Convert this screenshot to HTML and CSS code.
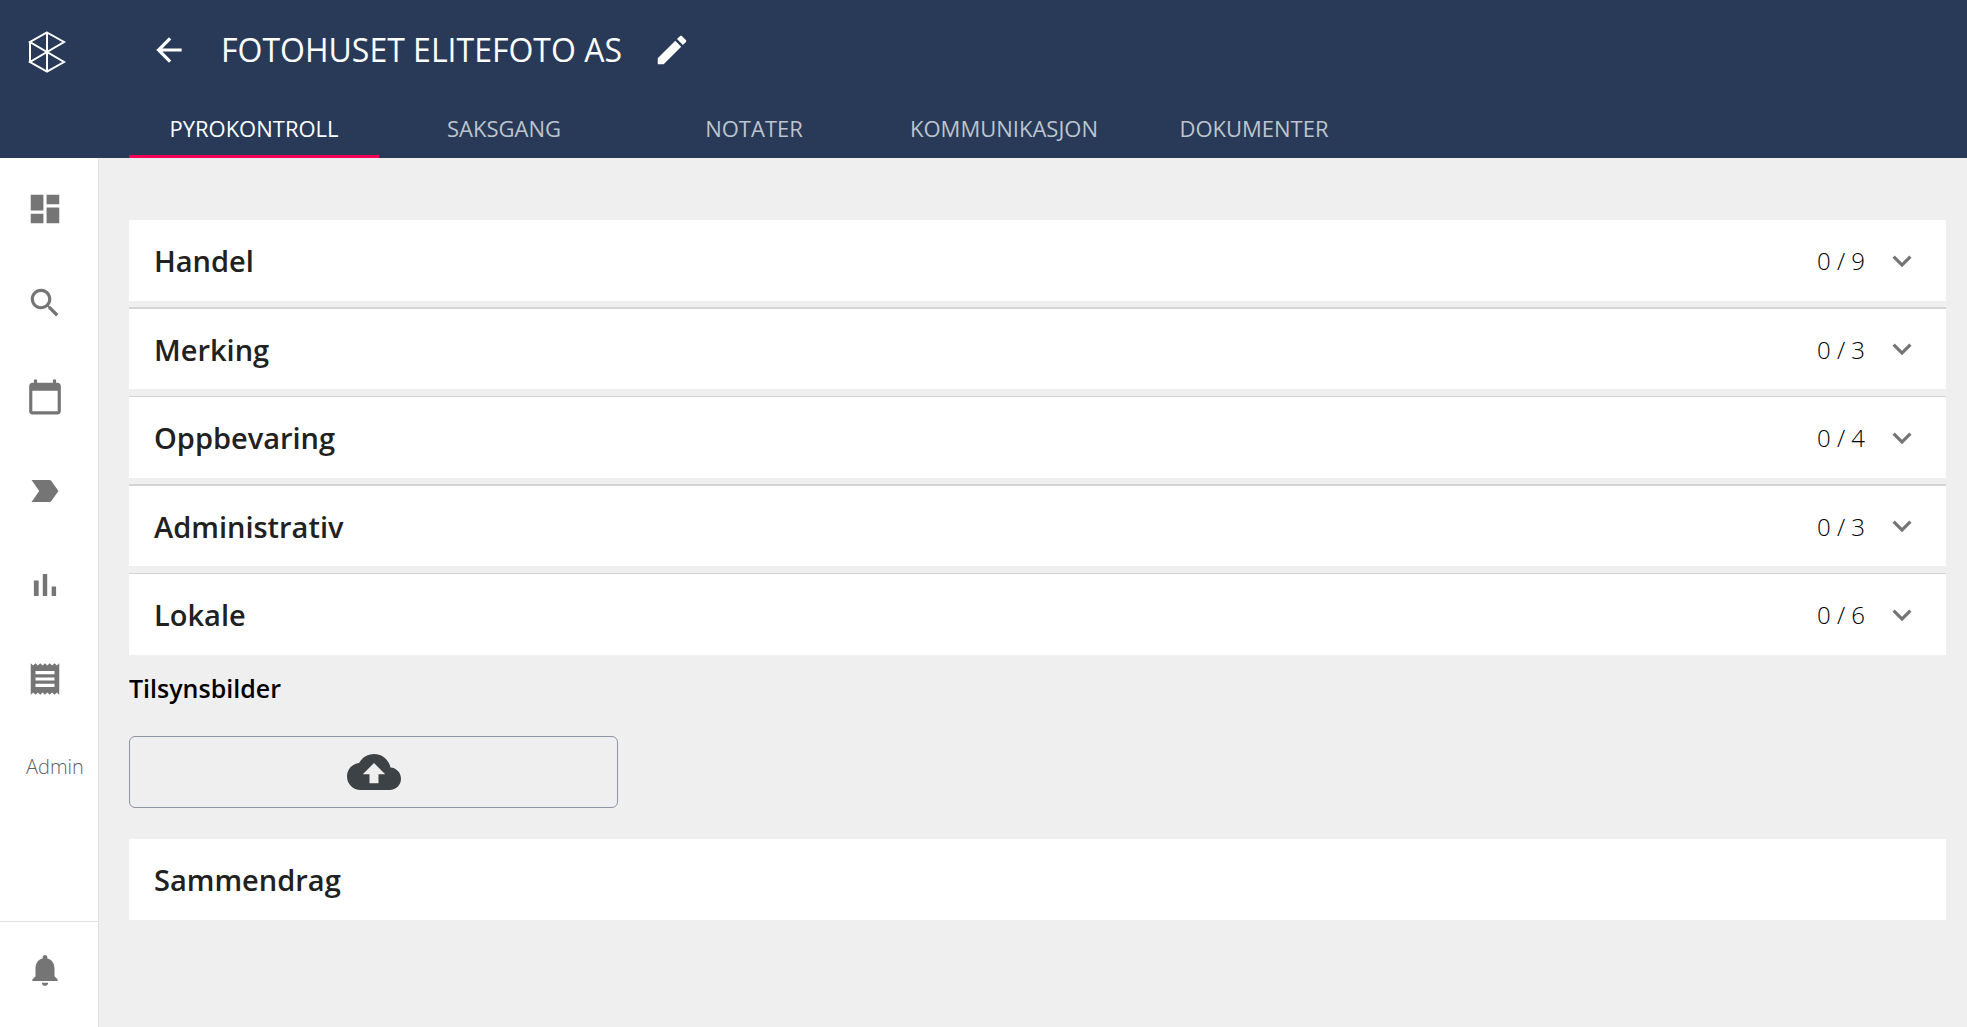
FILE: index.html
```
<!DOCTYPE html>
<html lang="no">
<head>
    <meta charset="UTF-8">
    <meta name="viewport" content="width=device-width, initial-scale=1.0">
    <title>Fotohuset Elitefoto AS</title>
    <link rel="stylesheet" href="styles.css">
</head>
<body>
    <header class="header">
        <a href="#" class="logo" aria-label="Hjem">
            <svg width="38" height="42" viewBox="0 0 38 42">
                <path d="M19 1.500 36 11 2 31 19 40.500 36 31 2 11zM2 11v20M19 1.500v39"/>
            </svg>
        </a>
        <div class="header-main">
            <div class="title-row">
                <button class="icon-button" aria-label="Tilbake">
                    <svg class="icon" viewBox="0 0 24 24"><path d="M20 11H7.830l5.590-5.590L12 4l-8 8 8 8 1.410-1.410L7.830 13H20v-2z"/></svg>
                </button>
                <h1>FOTOHUSET ELITEFOTO AS</h1>
                <button class="icon-button" aria-label="Rediger">
                    <svg class="icon" viewBox="0 0 24 24"><path d="M3 17.250V21h3.750L17.810 9.940l-3.750-3.750L3 17.250zM20.710 7.040c.39-.39.39-1.020 0-1.410l-2.340-2.340c-.39-.39-1.020-.39-1.410 0l-1.830 1.830 3.750 3.750 1.830-1.830z"/></svg>
                </button>
            </div>
            <nav class="tabs">
                <a href="#" class="tab active">PYROKONTROLL</a>
                <a href="#" class="tab">SAKSGANG</a>
                <a href="#" class="tab">NOTATER</a>
                <a href="#" class="tab">KOMMUNIKASJON</a>
                <a href="#" class="tab">DOKUMENTER</a>
            </nav>
        </div>
    </header>

    <div class="page">
        <aside class="sidebar">
            <nav class="side-nav">
                <a href="#" aria-label="Oversikt">
                    <svg class="icon" viewBox="0 0 24 24"><path d="M3 13h8V3H3v10zm0 8h8v-6H3v6zm10 0h8V11h-8v10zm0-18v6h8V3h-8z"/></svg>
                </a>
                <a href="#" aria-label="Søk">
                    <svg class="icon" viewBox="0 0 24 24"><path d="M15.500 14h-.79l-.28-.27C15.410 12.590 16 11.110 16 9.500 16 5.910 13.090 3 9.500 3S3 5.910 3 9.500 5.910 16 9.500 16c1.610 0 3.090-.59 4.230-1.570l.27.28v.79l5 4.990L20.490 19l-4.990-5zm-6 0C7.010 14 5 11.990 5 9.500S7.010 5 9.500 5 14 7.010 14 9.500 11.990 14 9.500 14z"/></svg>
                </a>
                <a href="#" aria-label="Kalender">
                    <svg class="icon" viewBox="0 0 24 24"><path d="M20 3h-1V1h-2v2H7V1H5v2H4c-1.100 0-2 .9-2 2v16c0 1.100.9 2 2 2h16c1.100 0 2-.9 2-2V5c0-1.100-.9-2-2-2zm0 18H4V8h16v13z"/></svg>
                </a>
                <a href="#" aria-label="Saker">
                    <svg class="icon" viewBox="0 0 24 24"><path d="M3.500 18.990l11 .01c.67 0 1.270-.33 1.630-.84L20.500 12l-4.370-6.160c-.36-.51-.96-.84-1.630-.84l-11 .01L8.340 12 3.500 18.990z"/></svg>
                </a>
                <a href="#" aria-label="Statistikk">
                    <svg class="icon" viewBox="0 0 24 24"><path d="M5 9.200h3V19H5zM10.600 5h2.800v14h-2.800zm5.600 8H19v6h-2.800z"/></svg>
                </a>
                <a href="#" aria-label="Rapporter">
                    <svg class="icon" viewBox="0 0 24 24"><path d="M18 17H6v-2h12v2zm0-4H6v-2h12v2zm0-4H6V7h12v2zM3 22l1.500-1.500L6 22l1.500-1.500L9 22l1.500-1.500L12 22l1.500-1.500L15 22l1.500-1.500L18 22l1.500-1.500L21 22V2l-1.500 1.500L18 2l-1.500 1.500L15 2l-1.500 1.500L12 2l-1.500 1.500L9 2 7.500 3.500 6 2 4.500 3.500 3 2v20z"/></svg>
                </a>
                <a href="#" class="admin">Admin</a>
            </nav>
            <div class="side-bottom">
                <button class="icon-button" aria-label="Varsler">
                    <svg class="icon" viewBox="0 0 24 24"><path d="M12 22c1.100 0 2-.9 2-2h-4c0 1.100.89 2 2 2zm6-6v-5c0-3.070-1.640-5.640-4.500-6.320V4c0-.83-.67-1.500-1.500-1.500s-1.500.67-1.500 1.500v.68C7.630 5.360 6 7.920 6 11v5l-2 2v1h16v-1l-2-2z"/></svg>
                </button>
            </div>
        </aside>

        <main class="content">
            <div class="panels">
                <button class="panel" aria-expanded="false">
                    <span class="panel-title">Handel</span>
                    <span class="count">0 / 9</span>
                    <svg class="icon" viewBox="0 0 24 24"><path d="M16.590 8.590L12 13.170 7.410 8.590 6 10l6 6 6-6z"/></svg>
                </button>
                <button class="panel" aria-expanded="false">
                    <span class="panel-title">Merking</span>
                    <span class="count">0 / 3</span>
                    <svg class="icon" viewBox="0 0 24 24"><path d="M16.590 8.590L12 13.170 7.410 8.590 6 10l6 6 6-6z"/></svg>
                </button>
                <button class="panel" aria-expanded="false">
                    <span class="panel-title">Oppbevaring</span>
                    <span class="count">0 / 4</span>
                    <svg class="icon" viewBox="0 0 24 24"><path d="M16.590 8.590L12 13.170 7.410 8.590 6 10l6 6 6-6z"/></svg>
                </button>
                <button class="panel" aria-expanded="false">
                    <span class="panel-title">Administrativ</span>
                    <span class="count">0 / 3</span>
                    <svg class="icon" viewBox="0 0 24 24"><path d="M16.590 8.590L12 13.170 7.410 8.590 6 10l6 6 6-6z"/></svg>
                </button>
                <button class="panel" aria-expanded="false">
                    <span class="panel-title">Lokale</span>
                    <span class="count">0 / 6</span>
                    <svg class="icon" viewBox="0 0 24 24"><path d="M16.590 8.590L12 13.170 7.410 8.590 6 10l6 6 6-6z"/></svg>
                </button>
            </div>

            <h2>Tilsynsbilder</h2>
            <button class="upload" aria-label="Last opp bilder">
                <svg viewBox="0 0 24 24"><path d="M19.350 10.040C18.670 6.590 15.640 4 12 4 9.110 4 6.600 5.640 5.350 8.040 2.340 8.360 0 10.910 0 14c0 3.310 2.690 6 6 6h13c2.760 0 5-2.240 5-5 0-2.640-2.050-4.780-4.650-4.960zM14 13v4h-4v-4H7l5-5 5 5h-3z"/></svg>
            </button>

            <section class="summary">
                <h3 class="panel-title">Sammendrag</h3>
            </section>
        </main>
    </div>
</body>
</html>
```
FILE: styles.css
```
* {
    box-sizing: border-box;
}
body {
    margin: 0;
    min-height: 100vh;
    display: flex;
    flex-direction: column;
    font-family: "Open Sans", sans-serif;
    background: #efefef;
    color: #000;
}
h1, h2, h3 {
    margin: 0;
}
a {
    color: inherit;
    text-decoration: none;
}
button {
    font-family: inherit;
    color: inherit;
    background: none;
    border: 0;
    padding: 0;
    cursor: pointer;
}
.icon {
    display: block;
    width: 38px;
    height: 38px;
    fill: currentColor;
}

/* header */
.header {
    display: flex;
    height: 158px;
    background: #283a58;
    color: #fff;
}
.logo {
    width: 129px;
    padding: 31px 0 0 28px;
}
.logo svg {
    fill: none;
    stroke: #fff;
    stroke-width: 2;
}
.header-main {
    flex: 1;
    display: flex;
    flex-direction: column;
    justify-content: space-between;
}
.title-row {
    display: flex;
    align-items: center;
    height: 99px;
    padding-left: 21px;
}
.title-row h1 {
    margin: 0 31px 0 33px;
    font-size: 32px;
    line-height: 38px;
    font-weight: 400;
}
.tabs {
    display: flex;
}
.tab {
    width: 250px;
    height: 58px;
    line-height: 56px;
    border-bottom: 3px solid transparent;
    text-align: center;
    font-size: 22px;
    color: #bec4cd;
}
.tab.active {
    border-color: #f50057;
    color: #fff;
}

/* sidebar */
.page {
    flex: 1;
    display: flex;
}
.sidebar {
    display: flex;
    flex-direction: column;
    justify-content: space-between;
    width: 99px;
    background: #fff;
    border-right: 1px solid #e0e0e0;
    color: #757575;
}
.side-nav {
    display: flex;
    flex-direction: column;
    gap: 56px;
    padding: 32px 0 0 26px;
}
.admin {
    font-size: 20px;
    font-weight: 300;
    line-height: 26px;
    color: #616161;
}
.side-bottom {
    height: 106px;
    padding: 29px 0 0 26px;
    border-top: 1px solid #e0e0e0;
}

/* content */
.content {
    flex: 1;
    padding: 61px 21px 21px 30px;
}
.panel {
    display: flex;
    align-items: center;
    width: 100%;
    height: 82px;
    margin-bottom: 6px;
    padding: 0 25px;
    background: #fff;
    border-top: 1px solid #d3d3d3;
    color: #212121;
    text-align: left;
}
.panel:first-child {
    border-color: #efefef;
}
.panel:nth-child(even) {
    border-top-width: 2px;
    margin-bottom: 7px;
}
.panel:last-child {
    margin-bottom: 0;
}
.panel-title {
    flex: 1;
    font-size: 29px;
    font-weight: 600;
    color: #212121;
}
.count {
    margin-right: 18px;
    font-size: 24px;
    font-weight: 300;
    color: #000;
}
.panel .icon {
    color: #757575;
}
h2 {
    margin: 16px 0 31px;
    font-size: 25px;
    line-height: 34px;
    font-weight: 600;
}
.upload {
    display: flex;
    align-items: center;
    justify-content: center;
    width: 489px;
    height: 72px;
    margin-bottom: 31px;
    border: 1px solid #8b95a5;
    border-radius: 6px;
}
.upload svg {
    width: 54px;
    height: 54px;
    fill: #3c4245;
}
.summary {
    display: flex;
    align-items: center;
    height: 81px;
    padding: 0 25px;
    background: #fff;
}
```
